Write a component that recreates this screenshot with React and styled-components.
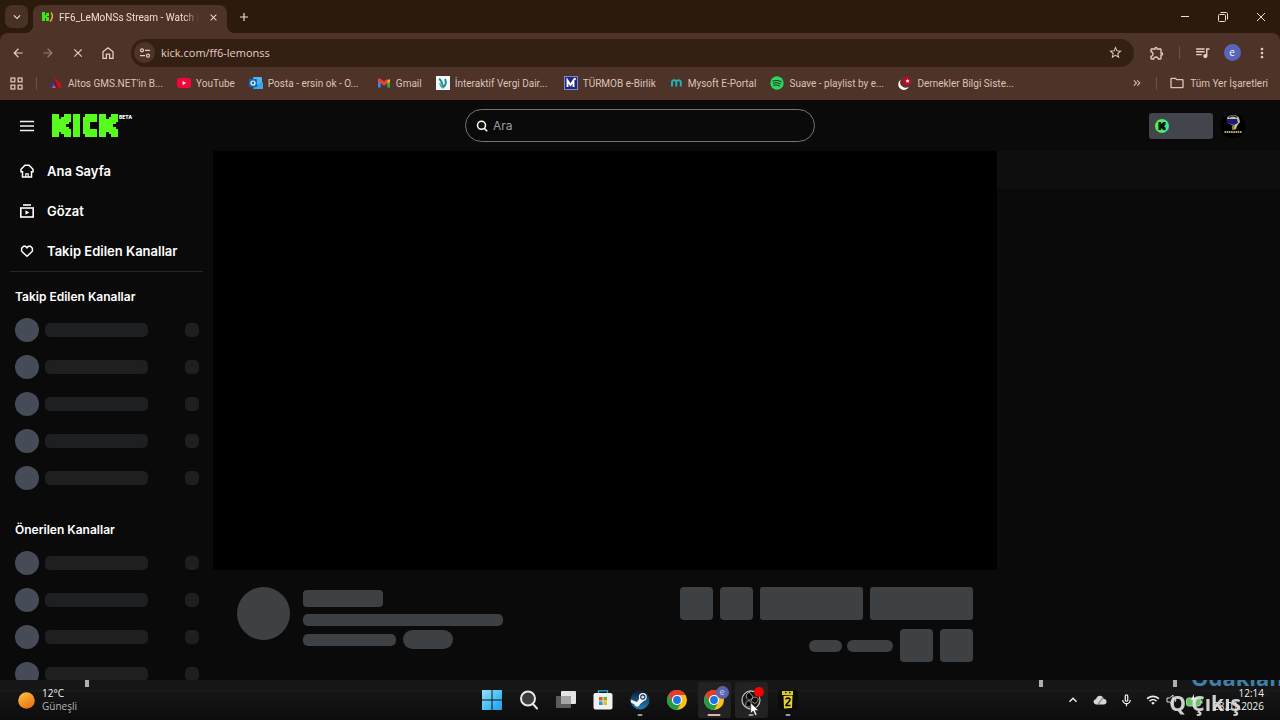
import React from 'react'
import styled, { createGlobalStyle } from 'styled-components'
import {
	MdArrowBack,
	MdArrowForward,
	MdClose,
	MdAdd,
	MdStarBorder,
	MdOutlineExtension,
	MdQueueMusic,
	MdMoreVert,
	MdKeyboardArrowDown,
	MdKeyboardArrowUp,
	MdKeyboardDoubleArrowRight,
	MdOutlineFolder,
	MdOutlineMicNone,
	MdWifi,
} from 'react-icons/md'

const followed = [1, 2, 3, 4, 5]
const recommended = [1, 2, 3, 4]

const App = () => (
	<>
		<GlobalStyle />
		<Screen>
			<TabStrip>
				<TabSearch aria-label="Sekmelerde ara">
					<MdKeyboardArrowDown size={14} />
				</TabSearch>
				<Tab>
					<Favicon />
					<TabTitle>FF6_LeMoNSs Stream - Watch Live</TabTitle>
					<TabClose aria-label="Sekmeyi kapat">
						<MdClose size={11} />
					</TabClose>
				</Tab>
				<NewTab aria-label="Yeni sekme">
					<MdAdd size={14} />
				</NewTab>
				<WindowButtons />
			</TabStrip>

			<Toolbar>
				<NavRow>
					<IconButton aria-label="Geri"><MdArrowBack size={14} /></IconButton>
					<IconButton aria-label="İleri" $dim><MdArrowForward size={14} /></IconButton>
					<IconButton aria-label="Durdur"><MdClose size={14} /></IconButton>
					<IconButton aria-label="Ana sayfa"><BrowserHome /></IconButton>
					<AddressBar>
						<SiteInfo aria-label="Site bilgileri"><TuneIcon /></SiteInfo>
						<AddressInput aria-label="Adres" defaultValue="kick.com/ff6-lemonss" />
						<StarButton aria-label="Yer işareti ekle"><MdStarBorder size={15} /></StarButton>
					</AddressBar>
					<IconButton aria-label="Uzantılar"><MdOutlineExtension size={16} /></IconButton>
					<Separator />
					<IconButton aria-label="Medya"><MdQueueMusic size={17} /></IconButton>
					<IconButton aria-label="Profil"><Profile>e</Profile></IconButton>
					<IconButton aria-label="Menü"><MdMoreVert size={16} /></IconButton>
				</NavRow>
				<Bookmarks>
					<AppsButton aria-label="Uygulamalar"><AppsIcon /></AppsButton>
					<Separator />
					<BookmarkList>
						{bookmarks.map(({ label, Icon, wide }) => (
							<Bookmark key={label} href="#">
								<Icon />
								<BookmarkLabel $wide={wide}>{label}</BookmarkLabel>
							</Bookmark>
						))}
					</BookmarkList>
					<MoreButton aria-label="Diğer yer işaretleri">
						<MdKeyboardDoubleArrowRight size={12} />
					</MoreButton>
					<Separator />
					<AllBookmarks>
						<MdOutlineFolder size={16} />
						Tüm Yer İşaretleri
					</AllBookmarks>
				</Bookmarks>
			</Toolbar>

			<Site>
				<SiteHeader>
					<Brand>
						<MenuButton aria-label="Menü"><MenuIcon /></MenuButton>
						<LogoLink href="#" aria-label="Kick">
							<KickLogo />
							<Beta>BETA</Beta>
						</LogoLink>
					</Brand>
					<Search>
						<SearchIcon />
						<SearchInput aria-label="Ara" placeholder="Ara" />
					</Search>
					<Account>
						<CoinButton aria-label="Kicks"><Coin /></CoinButton>
						<AvatarButton aria-label="Hesap"><UserAvatar /></AvatarButton>
					</Account>
				</SiteHeader>

				<Body>
					<Sidebar>
						<Menu>
							<MenuItem href="#"><SideHome />Ana Sayfa</MenuItem>
							<MenuItem href="#"><SideBrowse />Gözat</MenuItem>
							<MenuItem href="#"><SideHeart />Takip Edilen Kanallar</MenuItem>
						</Menu>
						<Section>
							<SectionTitle>Takip Edilen Kanallar</SectionTitle>
							{followed.map(id => <ChannelSkeleton key={id} />)}
						</Section>
						<Section>
							<SectionTitle>Önerilen Kanallar</SectionTitle>
							{recommended.map(id => <ChannelSkeleton key={id} />)}
						</Section>
					</Sidebar>

					<Main>
						<Video />
						<StreamInfo>
							<Bone $w={53} $h={53} $r={27} />
							<StreamLines>
								<Bone $w={80} $h={17} $r={4} />
								<Bone $w={200} $h={12} $r={5} />
								<BoneRow $gap={7}>
									<Bone $w={93} $h={12} $r={5} />
									<Bone $w={50} $h={19} $r={10} />
								</BoneRow>
							</StreamLines>
							<StreamActions>
								<BoneRow $gap={7}>
									<Bone $w={33} $h={33} $r={4} />
									<Bone $w={33} $h={33} $r={4} />
									<Bone $w={103} $h={33} $r={3} />
									<Bone $w={103} $h={33} $r={3} />
								</BoneRow>
								<BoneRow $gap={7}>
									<BoneRow $gap={5}>
										<Bone $w={33} $h={12} $r={6} />
										<Bone $w={46} $h={12} $r={6} />
									</BoneRow>
									<Bone $w={33} $h={33} $r={4} />
									<Bone $w={33} $h={33} $r={4} />
								</BoneRow>
							</StreamActions>
						</StreamInfo>
					</Main>

					<Chat>
						<ChatHeader />
					</Chat>
				</Body>
			</Site>

			<Taskbar>
				<Weather>
					<Sun />
					<WeatherText>
						<span>12°C</span>
						<small>Güneşli</small>
					</WeatherText>
				</Weather>
				<Apps>
					<AppButton aria-label="Başlat"><WindowsIcon /></AppButton>
					<AppButton aria-label="Ara"><TaskSearchIcon /></AppButton>
					<AppButton aria-label="Görev görünümü"><TaskViewIcon /></AppButton>
					<AppButton aria-label="Microsoft Store"><StoreIcon /></AppButton>
					<AppButton aria-label="Steam" $running><SteamIcon /></AppButton>
					<AppButton aria-label="Chrome"><ChromeIcon /></AppButton>
					<AppButton aria-label="Chrome" $running $active>
						<ChromeIcon />
						<Badge>e</Badge>
					</AppButton>
					<AppButton aria-label="OBS Studio" $running $hover>
						<ObsIcon />
						<RecordBadge />
						<Cursor />
					</AppButton>
					<AppButton aria-label="Oyun" $running><GameIcon /></AppButton>
				</Apps>
				<Tray>
					<TrayButton aria-label="Gizli simgeler"><MdKeyboardArrowUp size={16} /></TrayButton>
					<TrayButton aria-label="OneDrive"><CloudIcon /></TrayButton>
					<TrayButton aria-label="Mikrofon"><MdOutlineMicNone size={15} /></TrayButton>
					<StatusIcons>
						<MdWifi size={14} />
						<SpeakerIcon />
						<BatteryIcon />
					</StatusIcons>
					<Clock>
						<span>12:14</span>
						<span>28.01.2026</span>
					</Clock>
				</Tray>
				<Overlay>
					<Marker $left="85px" />
					<Marker $left="1039px" />
					<Marker $left="1173px" />
					<OverlayLink>Odaklan</OverlayLink>
				</Overlay>
				<ExitLabel>Q Çıkış</ExitLabel>
			</Taskbar>
		</Screen>
	</>
)

/* Browser icons */

const Favicon = () => (
	<svg width="12" height="12" viewBox="0 0 12 12">
		<g fill="#35e81c">
			<rect x="0" y="1" width="3" height="9" />
			<rect x="3" y="4" width="2" height="3" />
			<rect x="4" y="2" width="3" height="3" />
			<rect x="4" y="6" width="3" height="4" />
		</g>
		<path d="M9 1.500c2 2 2 6-1 9" fill="none" stroke="#e8a735" strokeWidth="1.600" />
	</svg>
)

const BrowserHome = () => (
	<svg width="14" height="14" viewBox="0 0 14 14" fill="none" stroke="currentColor" strokeWidth="1.300">
		<path d="M2 5.700 7 1.800l5 3.900v6.600H8.600V8.200H5.400v4.100H2z" />
	</svg>
)

const TuneIcon = () => (
	<svg width="12" height="12" viewBox="0 0 12 12" fill="none" stroke="currentColor" strokeWidth="1.200">
		<circle cx="3" cy="3.300" r="1.500" />
		<path d="M6 3.300h5M1 8.700h5" />
		<circle cx="9" cy="8.700" r="1.500" />
	</svg>
)

const AppsIcon = () => (
	<svg width="13" height="13" viewBox="0 0 13 13" fill="none" stroke="currentColor" strokeWidth="1.300">
		<rect x="1" y="1" width="3.800" height="3.800" />
		<rect x="8.200" y="1" width="3.800" height="3.800" />
		<rect x="1" y="8.200" width="3.800" height="3.800" />
		<rect x="8.200" y="8.200" width="3.800" height="3.800" />
	</svg>
)

const AltosIcon = () => (
	<svg width="14" height="14" viewBox="0 0 14 14">
		<path d="M5 2c3 1 7 5 8 9l-4 1z" fill="#c4121f" />
		<path d="M5 2 9 12H6.500z" fill="#7c1020" />
		<path d="M1 12 4.500 5 7 12z" fill="#2d3a9c" />
		<path d="m3 12 2-3 2 3z" fill="#d9536b" />
	</svg>
)

const YouTubeIcon = () => (
	<svg width="14" height="14" viewBox="0 0 14 14">
		<rect y="2" width="14" height="10" rx="2.500" fill="#f3063c" />
		<path d="M5.600 4.900v4.200L9.200 7z" fill="#fff" />
	</svg>
)

const OutlookIcon = () => (
	<svg width="14" height="14" viewBox="0 0 14 14">
		<rect x="4" y="1" width="9" height="8" rx="1" fill="#50b4ee" />
		<path d="M4 6.500 8.500 9.500 14 6v7H4z" fill="#1a86d4" />
		<path d="M4 13 14 6.500V13z" fill="#38a9ea" />
		<rect y="3" width="8" height="8" rx="1" fill="#0f6cbd" />
		<circle cx="4" cy="7" r="2" fill="none" stroke="#fff" strokeWidth="1.200" />
	</svg>
)

const GmailIcon = () => (
	<svg width="14" height="14" viewBox="0 0 14 14">
		<path d="M1 4v7.500h2.700V6z" fill="#4285f4" />
		<path d="M13 4v7.500h-2.700V6z" fill="#34a853" />
		<path d="M10.300 4.200 13 3v2.500l-2.700 2z" fill="#fbbc04" />
		<path d="M1 3.800C1 2.500 2.500 2 3.500 2.800L7 5.500l3.500-2.700v4.400L7 9.800 3.700 7.300 1 5.300z" fill="#ea4335" />
	</svg>
)

const TaxIcon = () => (
	<svg width="14" height="14" viewBox="0 0 14 14">
		<rect width="14" height="14" fill="#f2f8f8" />
		<path d="M3 3c3 1 3 5 4 8 2-1 4-4 2-8" fill="none" stroke="#1e8d9b" strokeWidth="2" />
		<path d="M4 7c0 3 2 4.500 3.500 5" fill="none" stroke="#3bb1ad" strokeWidth="1.400" />
	</svg>
)

const TurmobIcon = () => (
	<svg width="14" height="14" viewBox="0 0 14 14">
		<rect x=".5" y=".5" width="13" height="13" fill="#1f2a7c" stroke="#7f88c6" />
		<path d="M3.500 11V4.500L6.500 9l3-4.500V11" fill="none" stroke="#fff" strokeWidth="1.900" />
		<circle cx="11" cy="3" r="1" fill="#fff" />
	</svg>
)

const MysoftIcon = () => (
	<svg width="13" height="14" viewBox="0 0 13 14" fill="none" stroke="#1eb4b4" strokeWidth="1.900">
		<path d="M2 10.500V6.500c0-3 4.300-3 4.300 0v4M6.300 6.500c0-3 4.500-3 4.500 0v4" />
	</svg>
)

const SpotifyIcon = () => (
	<svg width="14" height="14" viewBox="0 0 14 14">
		<circle cx="7" cy="7" r="6.700" fill="#2bd760" />
		<path d="M3 5c3-.9 6-.6 8.200.7M3.300 7.200c2.500-.7 5-.4 7 .7M3.700 9.300c2-.5 4-.3 5.600.6" fill="none" stroke="#20382a" strokeWidth="1.100" strokeLinecap="round" />
	</svg>
)

const DernekIcon = () => (
	<svg width="14" height="14" viewBox="0 0 14 14">
		<circle cx="8.500" cy="5.500" r="5" fill="#a3152b" />
		<path d="M3 3.500A5.600 5.600 0 1 0 11 10.500 5.400 5.400 0 0 1 3 3.500z" fill="#fff" />
		<path d="m9.500 3 .6 1.300 1.400.1-1 1 .3 1.400-1.300-.7-1.200.7.300-1.400-1-1 1.300-.1z" fill="#fff" />
	</svg>
)

const bookmarks = [
	{ label: "Altos GMS.NET'in B...", Icon: AltosIcon, wide: true },
	{ label: 'YouTube', Icon: YouTubeIcon },
	{ label: 'Posta - ersin ok - O...', Icon: OutlookIcon, wide: true },
	{ label: 'Gmail', Icon: GmailIcon },
	{ label: 'İnteraktif Vergi Dair...', Icon: TaxIcon, wide: true },
	{ label: 'TÜRMOB e-Birlik', Icon: TurmobIcon },
	{ label: 'Mysoft E-Portal', Icon: MysoftIcon },
	{ label: 'Suave - playlist by e...', Icon: SpotifyIcon, wide: true },
	{ label: 'Dernekler Bilgi Siste...', Icon: DernekIcon, wide: true },
]

const WindowButtons = () => (
	<WindowControls>
		<WindowButton aria-label="Küçült">
			<svg width="10" height="10" viewBox="0 0 10 10" stroke="currentColor"><path d="M1 4.500h8" /></svg>
		</WindowButton>
		<WindowButton aria-label="Geri yükle">
			<svg width="10" height="10" viewBox="0 0 10 10" fill="none" stroke="currentColor">
				<rect x=".5" y="2.500" width="7" height="7" rx="1" />
				<path d="M2.500.5H8c1 0 1.500.5 1.500 1.500v5.500" />
			</svg>
		</WindowButton>
		<WindowButton aria-label="Kapat">
			<svg width="10" height="10" viewBox="0 0 10 10" stroke="currentColor"><path d="m1 1 8 8M9 1 1 9" /></svg>
		</WindowButton>
	</WindowControls>
)

/* Site icons */

const BlockK = ({ x = 0 }) => (
	<g transform={`translate(${x} 0)`}>
		<rect x="0" y="0" width="3" height="9" />
		<rect x="2" y="2" width="5" height="2" />
		<rect x="2" y="2" width="4" height="5" />
		<rect x="2" y="5" width="5" height="2" />
		<rect x="4" y="1" width="3" height="3" />
		<rect x="4" y="5" width="3" height="3" />
		<rect x="5" y="0" width="3" height="3" />
		<rect x="5" y="6" width="3" height="3" />
	</g>
)

const KickLogo = () => (
	<svg width="66" height="23" viewBox="0 0 28 9" preserveAspectRatio="none" shapeRendering="crispEdges" fill="#57fb1e">
		<BlockK />
		<rect x="9" width="3" height="9" />
		<rect x="13" y="1" width="3" height="7" />
		<rect x="14" y="0" width="5" height="3" />
		<rect x="14" y="6" width="5" height="3" />
		<BlockK x={20} />
	</svg>
)

const MenuIcon = () => (
	<svg width="14" height="12" viewBox="0 0 14 12" stroke="#f2f2f2" strokeWidth="1.700">
		<path d="M0 1.500h14M0 6h14M0 10.500h14" />
	</svg>
)

const SearchIcon = () => (
	<svg width="12" height="12" viewBox="0 0 12 12" fill="none" stroke="#fff" strokeWidth="1.600">
		<circle cx="5.500" cy="5.300" r="4" />
		<path d="m8.200 8.200 3 3" />
	</svg>
)

const Coin = () => (
	<svg width="14" height="14" viewBox="0 0 14 14">
		<defs>
			<linearGradient id="coin" x1="0" x2="1">
				<stop offset="0" stopColor="#5df542" />
				<stop offset="1" stopColor="#2fe9a4" />
			</linearGradient>
		</defs>
		<circle cx="7" cy="7" r="7" fill="url(#coin)" />
		<g transform="translate(3.400 3) scale(.9)" fill="#06170c"><BlockK /></g>
	</svg>
)

const UserAvatar = () => (
	<svg width="26" height="26" viewBox="0 0 26 26">
		<circle cx="13" cy="13" r="12.500" fill="#000" />
		<path d="M7 5c2-4 10-4 12 0l1 4-3 4-1 3-3 1 1-4-6-3z" fill="#c9c28a" />
		<path d="M6 6h11l1 4-4 2-7-2z" fill="#1b1780" />
		<path d="M9 4.500c2-2 6-2 8 0" fill="none" stroke="#28243a" strokeWidth="1.500" />
		<path d="m12 13 3-1-1 4-2 1z" fill="#8b7d3c" />
		<path d="M4.500 19h17" stroke="#b6ab4e" strokeWidth="2" strokeDasharray="1.600 .6" />
	</svg>
)

const SideHome = () => (
	<svg width="14" height="14" viewBox="0 0 14 14" fill="none" stroke="currentColor" strokeWidth="1.500">
		<path d="M2.500 13V7.800H1V5.200L5 1.200h4l4 4v2.600h-1.500V13z" />
		<path d="M5.800 13V9.800h2.400V13" strokeWidth="1.200" />
	</svg>
)

const SideBrowse = () => (
	<svg width="14" height="14" viewBox="0 0 14 14" fill="none" stroke="currentColor" strokeWidth="1.600">
		<path d="M3 1h8" />
		<rect x=".8" y="4" width="12.400" height="9" />
		<path d="M5.500 6.300v4.400L9.300 8.500z" fill="currentColor" stroke="none" />
	</svg>
)

const SideHeart = () => (
	<svg width="14" height="14" viewBox="0 0 14 14" fill="none" stroke="currentColor" strokeWidth="1.500">
		<path d="M7 12.200 1.600 7.200V4.200L3.600 2.200h1.900L7 3.800l1.500-1.600h1.900l2 2v3z" />
	</svg>
)

/* Taskbar icons */

const Sun = () => (
	<svg width="17" height="17" viewBox="0 0 17 17">
		<defs>
			<linearGradient id="sun" x1=".2" y1="0" x2=".8" y2="1">
				<stop offset="0" stopColor="#fcc13c" />
				<stop offset="1" stopColor="#ee6a10" />
			</linearGradient>
		</defs>
		<circle cx="8.500" cy="8.500" r="8.300" fill="url(#sun)" />
	</svg>
)

const WindowsIcon = () => (
	<svg width="20" height="20" viewBox="0 0 20 20">
		<defs>
			<linearGradient id="win" x1="0" y1="0" x2="1" y2="1">
				<stop offset="0" stopColor="#8fe3ff" />
				<stop offset="1" stopColor="#179fe8" />
			</linearGradient>
		</defs>
		<path d="M0 0h9.500v9.500H0zM10.500 0H20v9.500h-9.500zM0 10.500h9.500V20H0zM10.500 10.500H20V20h-9.500z" fill="url(#win)" />
	</svg>
)

const TaskSearchIcon = () => (
	<svg width="20" height="20" viewBox="0 0 20 20" fill="#3c3c3c" stroke="#e6e6e6" strokeWidth="2">
		<circle cx="9" cy="8.500" r="7" />
		<path d="m14 14 4 4.500" strokeLinecap="round" />
	</svg>
)

const TaskViewIcon = () => (
	<svg width="22" height="20" viewBox="0 0 22 20">
		<rect x="1" y="6" width="15" height="12" rx="1" fill="#5c5c5c" />
		<rect x="6" y="1" width="15" height="13" rx="1" fill="#e4e4e4" />
		<path d="M6 6h10v8H6z" fill="#a5a5a5" />
	</svg>
)

const StoreIcon = () => (
	<svg width="20" height="20" viewBox="0 0 20 20">
		<path d="M5.500 4V.8h9V4" fill="none" stroke="#2fb0e6" strokeWidth="1.300" />
		<rect x=".5" y="3" width="19" height="16.500" rx="2" fill="#f1f1f1" />
		<path d="M6 7h3.600v3.600H6z" fill="#e8542c" />
		<path d="M10.400 7H14v3.600h-3.600z" fill="#7cb51b" />
		<path d="M6 11.400h3.600V15H6z" fill="#1b9ee0" />
		<path d="M10.400 11.400H14V15h-3.600z" fill="#f5b715" />
	</svg>
)

const SteamIcon = () => (
	<svg width="20" height="20" viewBox="0 0 20 20">
		<defs>
			<linearGradient id="steam" x1="0" y1="0" x2="0" y2="1">
				<stop offset="0" stopColor="#0d1c3a" />
				<stop offset="1" stopColor="#1f7fb5" />
			</linearGradient>
		</defs>
		<circle cx="10" cy="10" r="9.500" fill="url(#steam)" />
		<path d="M.6 9.500 7 12l3-4.500 4.500 3-4.500 3.500c-1 4-5 3-5.500.5L.9 12.500z" fill="#f4f4f4" />
		<circle cx="12.800" cy="7" r="3.300" fill="#1c3154" stroke="#f4f4f4" strokeWidth="1.300" />
		<circle cx="12.800" cy="7" r="1.600" fill="#d7dde6" />
	</svg>
)

const ChromeIcon = () => (
	<svg width="20" height="20" viewBox="0 0 20 20">
		<circle cx="10" cy="10" r="10" fill="#fbc116" />
		<path d="M1.340 5A10 10 0 0 1 18.660 5H10a5 5 0 0 0-4.330 7.500z" fill="#e33b2e" />
		<path d="M1.340 5A10 10 0 0 0 10 20l4.330-7.500a5 5 0 0 1-8.660 0z" fill="#229c4b" />
		<circle cx="10" cy="10" r="5" fill="#fff" />
		<circle cx="10" cy="10" r="3.900" fill="#1a73e8" />
	</svg>
)

const ObsIcon = () => (
	<svg width="20" height="20" viewBox="0 0 20 20">
		<circle cx="10" cy="10" r="9" fill="#161618" stroke="#b9b9b9" strokeWidth="1.300" />
		<g fill="#050505" stroke="#a8a8a8" strokeWidth=".9">
			<path d="M8.500 2.200c-4 1.500-4.500 6-.5 8 3-.5 4.500-3 3-5-1-1-2.500-1-2.500-3z" />
			<path d="M17.500 9.500c-2-3.500-6.500-3-7 1 1.500 3 4.500 3.500 5.500 1.500.5-1.500 0-2 1.500-2.500z" />
			<path d="M4 15.500c3 3 7 1 6.500-2.500C9 10 5.500 10.500 5 12.800c0 1.500.3 2-1 2.700z" />
		</g>
	</svg>
)

const GameIcon = () => (
	<svg width="20" height="20" viewBox="0 0 20 20">
		<rect width="20" height="20" rx="3" fill="#0b0b09" />
		<path d="M4 1h11v4H4z" fill="#dcc72c" />
		<path d="M7 2.500h1.500M11 2.500h1.500" stroke="#1a1808" strokeWidth="1.500" />
		<path d="m5.500 6 9-.5L14 18l-8 .5z" fill="#e3d22d" />
		<path d="M7.800 9.500C8 7.500 12 7.500 12 9.800c0 2-4 3.500-4 5.700h4.500" fill="none" stroke="#0b0b09" strokeWidth="1.700" />
	</svg>
)

const CloudIcon = () => (
	<svg width="14" height="10" viewBox="0 0 14 10">
		<path d="M3.500 9.500C-.3 9.500-.3 4.500 3 4.300 4-.2 9.800-.3 10.500 3.800c4 0 4 5.700.2 5.700z" fill="#d8d8d8" />
		<path d="m5 9.500 5-7" stroke="#8f8f8f" strokeWidth="1.300" />
	</svg>
)

const SpeakerIcon = () => (
	<svg width="14" height="12" viewBox="0 0 14 12" fill="none" stroke="#ddd">
		<path d="M1 4h2.500L7 1v10L3.500 8H1zM9 4c1 1 1 3 0 4" />
	</svg>
)

const BatteryIcon = () => (
	<svg width="17" height="13" viewBox="0 0 17 13">
		<rect x=".5" y="4" width="14" height="8" rx="2" fill="#69c46d" stroke="#9ad79c" />
		<rect x="15" y="6.500" width="1.500" height="3" fill="#9ad79c" />
		<path d="m8 0-3 6h3l-1 4 4-6H8z" fill="#eef8ee" />
	</svg>
)

const Cursor = () => (
	<CursorSvg width="10" height="15" viewBox="0 0 10 15">
		<path d="M.7.800v10.500l2.500-2.200 2 4.400 1.800-.8-1.900-4.300h3.400z" fill="#fff" stroke="#222" strokeWidth=".6" />
	</CursorSvg>
)

const ChannelSkeleton = () => (
	<Channel>
		<ChannelAvatar />
		<ChannelName />
		<ChannelCount />
	</Channel>
)

const GlobalStyle = createGlobalStyle`
	* {
		box-sizing: border-box;
	}

	body {
		margin: 0;
		background: #0a0a0a;
		color: #fff;
		font-family: "Open Sans", "Noto Sans", sans-serif;
		font-size: 10px;
	}

	button, input {
		border: 0;
		padding: 0;
		background: none;
		color: inherit;
		font: inherit;
		outline: none;
	}

	button {
		display: flex;
		align-items: center;
		justify-content: center;
	}

	a {
		color: inherit;
		text-decoration: none;
	}

	svg {
		display: block;
		flex: none;
	}
`

const Screen = styled.div`
	display: flex;
	flex-direction: column;
	height: 100vh;
	overflow: hidden;
`

const TabStrip = styled.div`
	display: flex;
	align-items: center;
	height: 33px;
	padding-left: 5px;
	background: #2c1a0d;
	color: #f0ddd4;
`

const TabSearch = styled.button`
	width: 23px;
	height: 23px;
	border-radius: 7px;
	background: #4a3126;
`

const Tab = styled.div`
	position: relative;
	display: flex;
	align-items: center;
	align-self: flex-end;
	gap: 5px;
	width: 194px;
	height: 28px;
	margin-left: 5px;
	padding: 0 7px 4px 9px;
	border-radius: 8px 8px 0 0;
	background: #4d3328;

	&::before,
	&::after {
		content: '';
		position: absolute;
		bottom: 0;
		width: 8px;
		height: 8px;
	}

	&::before {
		left: -8px;
		background: radial-gradient(circle at 0 0, transparent 8px, #4d3328 8px);
	}

	&::after {
		right: -8px;
		background: radial-gradient(circle at 100% 0, transparent 8px, #4d3328 8px);
	}
`

const TabTitle = styled.span`
	flex: 1;
	overflow: hidden;
	white-space: nowrap;
	font-family: Roboto, "Open Sans", sans-serif;
	mask-image: linear-gradient(90deg, #000 125px, transparent 140px);
`

const TabClose = styled.button`
	width: 14px;
	height: 14px;
`

const NewTab = styled.button`
	width: 34px;
	height: 28px;
`

const WindowControls = styled.div`
	display: flex;
	margin-left: auto;
`

const WindowButton = styled.button`
	width: 38px;
	height: 33px;
`

const Toolbar = styled.div`
	background: #4d3328;
	box-shadow: 0 -8px 0 #2c1a0d;
	border-radius: 8px 8px 0 0;
	color: #e6cdc2;
	clip-path: inset(0);
`

const NavRow = styled.div`
	display: flex;
	align-items: center;
	height: 39px;
	padding: 0 3px;
`

const IconButton = styled.button`
	width: 30px;
	height: 28px;
	opacity: ${({ $dim }) => ($dim ? 0.5 : 1)};
`

const AddressBar = styled.div`
	display: flex;
	flex: 1;
	align-items: center;
	height: 28px;
	margin: 0 8px;
	padding: 0 10px 0 3px;
	border-radius: 14px;
	background: #341f13;
`

const SiteInfo = styled.button`
	width: 21px;
	height: 21px;
	border-radius: 50%;
	background: #4d3328;
`

const AddressInput = styled.input`
	flex: 1;
	min-width: 0;
	margin-left: 6px;
	font-size: 11px;
`

const StarButton = styled.button`
	width: 18px;
	height: 18px;
`

const Separator = styled.span`
	width: 1px;
	height: 13px;
	margin: 0 7px;
	background: #6e5145;
`

const Profile = styled.span`
	width: 17px;
	height: 17px;
	border-radius: 50%;
	background: #5965bb;
	color: #fff;
	line-height: 16px;
	text-align: center;
`

const Bookmarks = styled.div`
	display: flex;
	align-items: center;
	height: 28px;
	padding: 0 12px 6px 10px;
	color: #dcc3b8;
	font-family: Roboto, "Open Sans", sans-serif;
`

const AppsButton = styled.button`
	width: 13px;
	margin-right: 6px;
`

const BookmarkList = styled.nav`
	display: flex;
	flex: 1;
	gap: 14px;
	margin-left: 5px;
	overflow: hidden;
`

const Bookmark = styled.a`
	display: flex;
	align-items: center;
	gap: 5px;
	white-space: nowrap;
`

const BookmarkLabel = styled.span`
	min-width: ${({ $wide }) => ($wide ? '95px' : '0')};
`

const MoreButton = styled.button`
	width: 12px;
	margin-right: 6px;
`

const AllBookmarks = styled.button`
	gap: 5px;
	margin-left: 5px;
	white-space: nowrap;
`

const Site = styled.div`
	display: flex;
	flex: 1;
	flex-direction: column;
	min-height: 0;
	font-family: Inter, "Liberation Sans", sans-serif;
`

const SiteHeader = styled.header`
	display: grid;
	grid-template-columns: 1fr 350px 1fr;
	align-items: center;
	height: 51px;
`

const Brand = styled.div`
	display: flex;
	align-items: center;
	gap: 18px;
	padding-left: 20px;
`

const MenuButton = styled.button`
	width: 14px;
`

const LogoLink = styled.a`
	display: flex;
	align-items: flex-start;
	gap: 1px;
`

const Beta = styled.span`
	font-size: 5px;
	font-weight: 800;
	line-height: 6px;
`

const Search = styled.div`
	display: flex;
	align-items: center;
	gap: 5px;
	height: 33px;
	padding: 0 10px;
	border: 1px solid #747474;
	border-radius: 17px;
`

const SearchInput = styled.input`
	flex: 1;
	font-size: 12px;

	&::placeholder {
		color: #9c9fa1;
		opacity: 1;
	}
`

const Account = styled.div`
	display: flex;
	align-items: center;
	justify-content: flex-end;
	gap: 7px;
	padding-right: 34px;
`

const CoinButton = styled.button`
	justify-content: flex-start;
	width: 64px;
	height: 26px;
	padding-left: 6px;
	border-radius: 3px;
	background: #42454b;
`

const AvatarButton = styled.button`
	width: 26px;
	height: 26px;
`

const Body = styled.div`
	display: grid;
	flex: 1;
	grid-template-columns: 213px 1fr 283px;
	min-height: 0;
`

const Sidebar = styled.aside`
	overflow: hidden;
`

const Menu = styled.nav`
	margin: 0 10px;
	border-bottom: 1px solid #242526;
`

const MenuItem = styled.a`
	display: flex;
	align-items: center;
	gap: 13px;
	height: 40px;
	padding-left: 10px;
	font-size: 13px;
	font-weight: 600;
`

const Section = styled.section`
	padding: 16px 14px 9px 15px;
`

const SectionTitle = styled.h2`
	margin: 0 0 5px;
	font-size: 12px;
	font-weight: 600;
	line-height: 18px;
`

const Channel = styled.div`
	display: flex;
	align-items: center;
	height: 37px;
`

const ChannelAvatar = styled.div`
	width: 24px;
	height: 24px;
	margin-right: 6px;
	border-radius: 50%;
	background: #454c57;
`

const ChannelName = styled.div`
	width: 103px;
	height: 14px;
	border-radius: 5px;
	background: #1d1f21;
`

const ChannelCount = styled.div`
	width: 14px;
	height: 14px;
	margin-left: auto;
	border-radius: 5px;
	background: #1d1f21;
`

const Main = styled.main`
	display: flex;
	flex-direction: column;
	min-width: 0;
`

const Video = styled.div`
	flex: 1;
	background: #000;
`

const StreamInfo = styled.div`
	display: flex;
	gap: 13px;
	height: 110px;
	padding: 17px 24px;
`

const StreamLines = styled.div`
	display: flex;
	flex: 1;
	flex-direction: column;
	gap: 7px;
	padding-top: 3px;

	> :last-child {
		margin-top: -3px;
	}
`

const StreamActions = styled.div`
	display: flex;
	flex-direction: column;
	align-items: flex-end;
	gap: 9px;
`

const BoneRow = styled.div`
	display: flex;
	align-items: center;
	gap: ${({ $gap }) => $gap}px;
`

const Bone = styled.div`
	flex: none;
	width: ${({ $w }) => $w}px;
	height: ${({ $h }) => $h}px;
	border-radius: ${({ $r }) => $r}px;
	background: #3e4143;
`

const Chat = styled.aside`
	background: #0a0a0a;
`

const ChatHeader = styled.div`
	height: 38px;
	background: #0e0e0e;
`

const Taskbar = styled.footer`
	position: relative;
	display: grid;
	grid-template-columns: 1fr auto 1fr;
	height: 40px;
	background: linear-gradient(#161616 10px, #1c1c1c 10px, #161616 12px, #0c0c0c);
	color: #f0f0f0;
`

const Weather = styled.div`
	display: flex;
	align-items: center;
	gap: 7px;
	padding-left: 18px;
`

const WeatherText = styled.div`
	display: flex;
	flex-direction: column;
	line-height: 13px;

	small {
		color: #b5b5b5;
		font-size: 10px;
	}
`

const Apps = styled.div`
	display: flex;
	align-items: center;
`

const AppButton = styled.button`
	position: relative;
	width: 37px;
	height: 36px;
	border-radius: 4px;
	background: ${({ $active, $hover }) => ($active || $hover ? '#222' : 'none')};
	background-clip: content-box;
	padding: 0 2px;

	&::after {
		content: '';
		position: absolute;
		bottom: 2px;
		left: 50%;
		display: ${({ $running }) => ($running ? 'block' : 'none')};
		width: ${({ $active }) => ($active ? 13 : 5)}px;
		height: 2px;
		border-radius: 1px;
		background: ${({ $active }) => ($active ? '#e3b3b0' : '#9b9b9b')};
		transform: translateX(-50%);
	}
`

const Badge = styled.span`
	position: absolute;
	top: 4px;
	right: 4px;
	width: 13px;
	height: 13px;
	border-radius: 50%;
	background: #5c62ad;
	color: #c9cdf0;
	font-size: 9px;
	line-height: 12px;
`

const RecordBadge = styled.span`
	position: absolute;
	top: 5px;
	right: 6px;
	width: 10px;
	height: 10px;
	border-radius: 50%;
	background: #f60000;
`

const CursorSvg = styled.svg`
	position: absolute;
	top: 20px;
	left: 17px;
	z-index: 1;
`

const Tray = styled.div`
	display: flex;
	align-items: center;
	justify-content: flex-end;
	padding-right: 16px;
`

const TrayButton = styled.button`
	width: 27px;
	height: 32px;
`

const StatusIcons = styled.div`
	display: flex;
	align-items: center;
	gap: 6px;
	margin: 0 6px;
`

const Clock = styled.div`
	display: flex;
	flex-direction: column;
	margin-left: 4px;
	line-height: 13px;
	text-align: right;
`

const Overlay = styled.div`
	position: absolute;
	inset: 0 0 auto;
	height: 7px;
	overflow: hidden;
`

const Marker = styled.span`
	position: absolute;
	top: 0;
	left: ${({ $left }) => $left};
	width: 4px;
	height: 7px;
	background: #b0b0b0;
`

const OverlayLink = styled.span`
	position: absolute;
	bottom: 0;
	left: 1191px;
	color: #3d80ab;
	font-size: 22px;
	font-weight: 700;
	line-height: 20px;
`

const ExitLabel = styled.span`
	position: absolute;
	right: 39px;
	bottom: 4px;
	color: #e4e4e4;
	font-size: 21px;
	font-weight: 700;
	line-height: 26px;
	opacity: 0.9;
`

export default App
